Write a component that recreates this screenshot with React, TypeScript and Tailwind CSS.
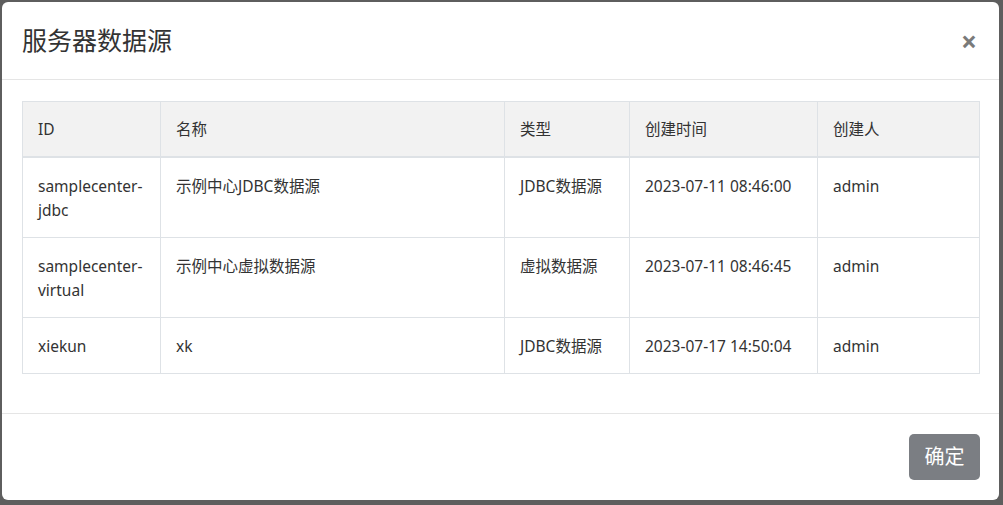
import React from 'react';

const rows = [
  { id: ['samplecenter-', 'jdbc'], name: '示例中心JDBC数据源', type: 'JDBC数据源', time: '2023-07-11 08:46:00', user: 'admin' },
  { id: ['samplecenter-', 'virtual'], name: '示例中心虚拟数据源', type: '虚拟数据源', time: '2023-07-11 08:46:45', user: 'admin' },
  { id: ['xiekun'], name: 'xk', type: 'JDBC数据源', time: '2023-07-17 14:50:04', user: 'admin' },
];

const font = { fontFamily: '"Noto Sans", "Noto Sans CJK SC", sans-serif' };

export default function App() {
  return (
    <div className="h-[505px] w-[1003px] overflow-hidden bg-[#5e5e5e] pl-[2px] pt-[2px]" style={font}>
      <div className="flex h-[498px] w-[997px] flex-col rounded-[6px] bg-white text-[#333]">
        {/* Header */}
        <div className="flex h-[78px] items-center justify-between border-b border-[#e5e5e5] pl-[20px] pr-[22px]">
          <h4 className="text-[25px] font-normal leading-none text-[#333]">服务器数据源</h4>
          <button className="text-[28px] font-bold leading-none text-[#7a7a7a]">×</button>
        </div>

        {/* Body */}
        <div className="flex-1 px-[20px] pt-[21px]">
          <table className="w-[957px] table-fixed border-collapse text-[15.5px] leading-[24px]">
            <colgroup>
              <col className="w-[138px]" />
              <col className="w-[344px]" />
              <col className="w-[125px]" />
              <col className="w-[188px]" />
              <col className="w-[162px]" />
            </colgroup>
            <thead>
              <tr className="bg-[#f2f2f2]">
                {['ID', '名称', '类型', '创建时间', '创建人'].map((h) => (
                  <th key={h} className="h-[55px] border border-b-2 border-[#dee2e6] px-[15px] text-left align-middle font-normal">
                    {h}
                  </th>
                ))}
              </tr>
            </thead>
            <tbody>
              {rows.map((r) => (
                <tr key={r.time}>
                  <td className="border border-[#dee2e6] px-[15px] pt-[16px] pb-[15px] align-top">
                    {r.id.map((p) => (
                      <div key={p}>{p}</div>
                    ))}
                  </td>
                  <td className="border border-[#dee2e6] px-[15px] pt-[16px] pb-[15px] align-top">{r.name}</td>
                  <td className="border border-[#dee2e6] px-[15px] pt-[16px] pb-[15px] align-top">{r.type}</td>
                  <td className="border border-[#dee2e6] px-[15px] pt-[16px] pb-[15px] align-top">{r.time}</td>
                  <td className="border border-[#dee2e6] px-[15px] pt-[16px] pb-[15px] align-top">{r.user}</td>
                </tr>
              ))}
            </tbody>
          </table>
        </div>

        {/* Footer */}
        <div className="flex h-[87px] items-center justify-end border-t border-[#e5e5e5] pr-[19px]">
          <button className="h-[46px] w-[71px] rounded-[5px] bg-[#7b7e83] text-[20px] text-white">确定</button>
        </div>
      </div>
    </div>
  );
}
